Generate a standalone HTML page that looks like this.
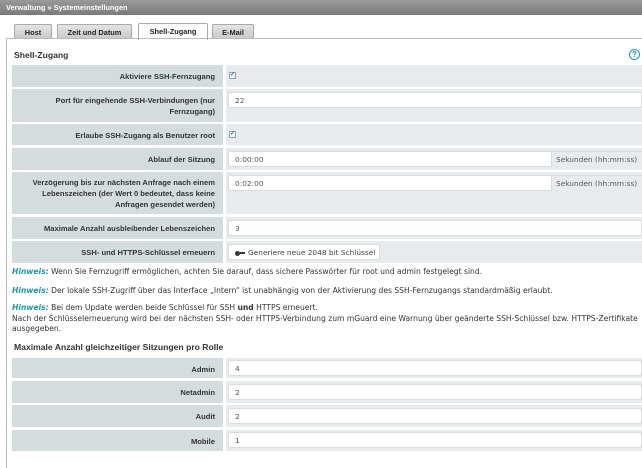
<!DOCTYPE html><html><head><meta charset="utf-8"><style>
*{margin:0;padding:0;box-sizing:border-box}
body{width:642px;height:460px;overflow:hidden;background:#fff;font-family:"Liberation Sans",sans-serif;font-size:7.8px;color:#333;position:relative}
.a{position:absolute}
.hdr{left:0;top:0;width:642px;height:15px;background:linear-gradient(#9a9a9a,#7a7a7a);color:#fff;font-weight:bold;padding:3px 6px;font-size:7.4px}
.tab{top:24px;height:15px;background:linear-gradient(#e4e4e4,#c8c8c8);border:1px solid #aaa;border-bottom:none;border-radius:2px 2px 0 0;font-weight:bold;text-align:center;padding-top:3px;color:#222;font-size:7.4px}
.tab.on{background:#fff;top:23px;height:17px}
.panel{left:6px;top:38px;width:640px;height:430px;border:1px solid #bbb;border-right:none;border-bottom:none}
.l{left:12px;width:211px;background:#d5dcdd;text-align:right;font-weight:bold;padding:6px 8px 0 8px;line-height:11px;color:#333;font-size:7.6px}
.v{left:226px;width:416px;background:#e8ebee}
.in{position:absolute;left:2px;top:3px;height:16px;background:#fff;border:1px solid #d8dcdf;border-radius:2px;padding:3px 6px;color:#555;white-space:nowrap;font-family:"DejaVu Sans",sans-serif;font-size:7.4px}
.un{position:absolute;top:3px;height:16px;left:326px;right:0;background:#e8ebee;border-top:1px solid #d8dcdf;padding:3px 4px;color:#555;white-space:nowrap;font-family:"DejaVu Sans",sans-serif;font-size:7.4px}
.cb{position:absolute;left:3px;top:7px;width:7px;height:7px;border:1px solid #8aa;background:#eef;font-size:6px;line-height:5px;color:#226;text-align:center}
.h{left:12px;color:#333;font-size:7.6px;white-space:nowrap;font-family:"DejaVu Sans",sans-serif}
.h i{color:#1a9aa8;font-weight:bold}
.tt{font-weight:bold;font-size:8.6px;left:14px;color:#333}
</style></head><body>
<div class="a hdr">Verwaltung » Systemeinstellungen</div>
<div class="a tab" style="left:14px;width:38px">Host</div>
<div class="a tab" style="left:57px;width:75px">Zeit und Datum</div>
<div class="a tab on" style="left:138px;width:70px">Shell-Zugang</div>
<div class="a tab" style="left:212px;width:42px">E-Mail</div>
<div class="a panel"></div>
<div class="a tt" style="top:50px">Shell-Zugang</div>
<div class="a" style="left:629px;top:49px;width:11px;height:11px;border:1.3px solid #1a9aa8;border-radius:50%;color:#1a9aa8;font-size:8px;font-weight:bold;text-align:center;line-height:9px">?</div>

<div class="a l" style="top:65px;height:22px">Aktiviere SSH-Fernzugang</div>
<div class="a v" style="top:65px;height:22px"><div class="cb">✓</div></div>
<div class="a l" style="top:89px;height:33px">Port für eingehende SSH-Verbindungen (nur Fernzugang)</div>
<div class="a v" style="top:89px;height:33px"><div class="in" style="right:0">22</div></div>
<div class="a l" style="top:124px;height:21px">Erlaube SSH-Zugang als Benutzer root</div>
<div class="a v" style="top:124px;height:21px"><div class="cb">✓</div></div>
<div class="a l" style="top:148px;height:22px">Ablauf der Sitzung</div>
<div class="a v" style="top:148px;height:22px"><div class="in" style="width:324px">0:00:00</div><div class="un">Sekunden (hh:mm:ss)</div></div>
<div class="a l" style="top:172px;height:42px;padding-top:5px">Verzögerung bis zur nächsten Anfrage nach einem Lebenszeichen (der Wert 0 bedeutet, dass keine Anfragen gesendet werden)</div>
<div class="a v" style="top:172px;height:42px"><div class="in" style="width:324px">0:02:00</div><div class="un">Sekunden (hh:mm:ss)</div></div>
<div class="a l" style="top:217px;height:22px;white-space:nowrap">Maximale Anzahl ausbleibender Lebenszeichen</div>
<div class="a v" style="top:217px;height:22px"><div class="in" style="right:0">3</div></div>
<div class="a l" style="top:241px;height:22px">SSH- und HTTPS-Schlüssel erneuern</div>
<div class="a v" style="top:241px;height:22px"><div class="in" style="width:152px;color:#444"><span style="display:inline-block;width:5px;height:5px;border-radius:50%;background:#333;vertical-align:middle"></span><span style="display:inline-block;width:5px;height:2px;background:#333;vertical-align:middle;margin-right:3px"></span>Generiere neue 2048 bit Schlüssel</div></div>

<div class="a h" style="top:267px"><i>Hinweis:</i> Wenn Sie Fernzugriff ermöglichen, achten Sie darauf, dass sichere Passwörter für root und admin festgelegt sind.</div>
<div class="a h" style="top:286px"><i>Hinweis:</i> Der lokale SSH-Zugriff über das Interface „Intern“ ist unabhängig von der Aktivierung des SSH-Fernzugangs standardmäßig erlaubt.</div>
<div class="a h" style="top:303px;line-height:10.5px"><i>Hinweis:</i> Bei dem Update werden beide Schlüssel für SSH <b>und</b> HTTPS erneuert.<br>Nach der Schlüsselerneuerung wird bei der nächsten SSH- oder HTTPS-Verbindung zum mGuard eine Warnung über geänderte SSH-Schlüssel bzw. HTTPS-Zertifikate<br>ausgegeben.</div>
<div class="a tt" style="top:342px">Maximale Anzahl gleichzeitiger Sitzungen pro Rolle</div>

<div class="a l" style="top:358px;height:20px">Admin</div>
<div class="a v" style="top:358px;height:20px"><div class="in" style="right:0;top:2px">4</div></div>
<div class="a l" style="top:381px;height:22px">Netadmin</div>
<div class="a v" style="top:381px;height:22px"><div class="in" style="right:0">2</div></div>
<div class="a l" style="top:405px;height:22px">Audit</div>
<div class="a v" style="top:405px;height:22px"><div class="in" style="right:0">2</div></div>
<div class="a l" style="top:430px;height:21px">Mobile</div>
<div class="a v" style="top:430px;height:21px"><div class="in" style="right:0;top:2px">1</div></div>
</body></html>
